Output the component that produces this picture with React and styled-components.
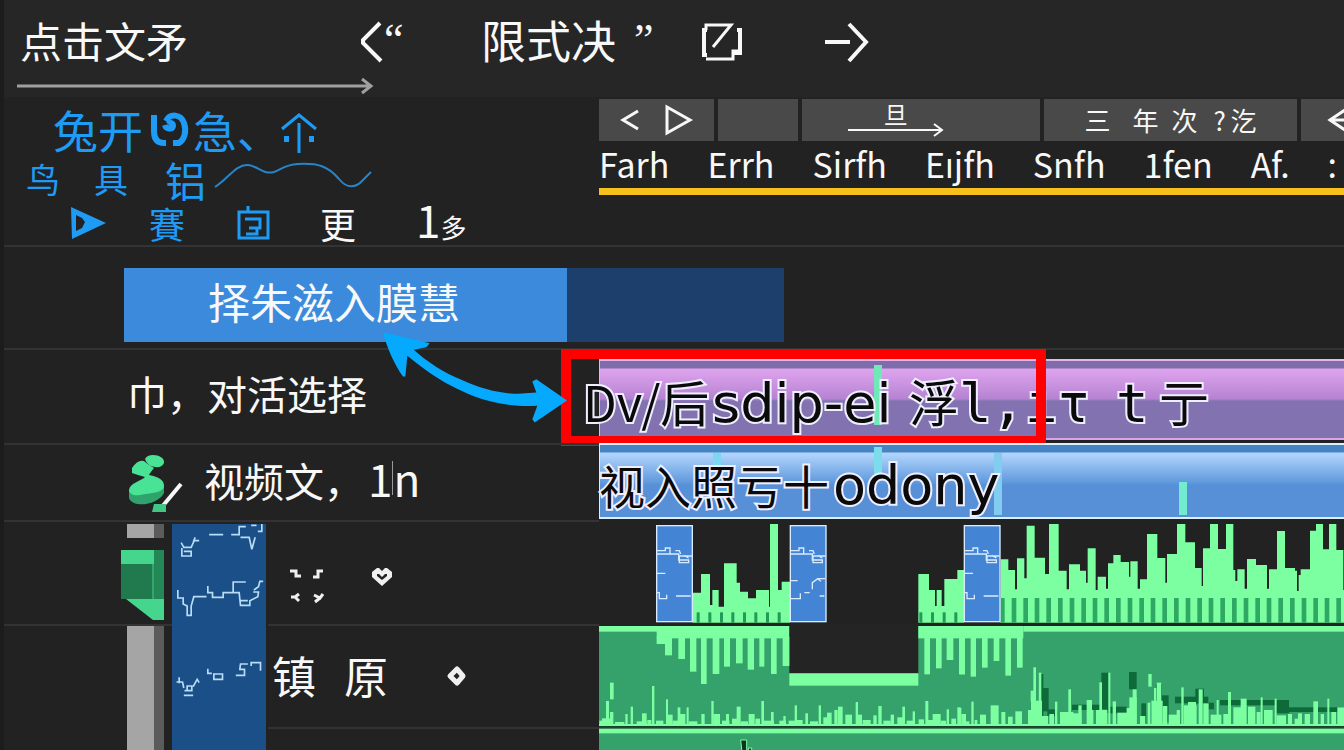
import React from "react";
import styled, { createGlobalStyle } from "styled-components";

const cjk = '"Noto Sans CJK SC", "Noto Sans", sans-serif';

const GlobalStyle = createGlobalStyle`
  * { box-sizing: border-box; }
  body { margin: 0; background: #222222; color: #f8f8f8; font-family: ${cjk}; overflow: hidden; }
  button { border: 0; padding: 0; font: inherit; color: inherit; }
`;

const Page = styled.main`
  display: flex;
  flex-direction: column;
  height: 100vh;
  border-left: 4px solid #1c1c1c;
`;

const Header = styled.header`
  background: #262626;
  padding-left: 16px;
  height: 97px;
  flex: none;
`;

const HeaderRow = styled.div`
  display: grid;
  grid-template-columns: 341fr 120fr 220fr 124fr 519fr;
  align-items: center;
  height: 80px;
`;

const HeaderGroup = styled.div`
  display: flex;
  align-items: center;
  gap: ${(p) => p.$gap || 0}px;
`;

const Title = styled.h1`
  margin: 0;
  font-size: ${(p) => p.$size || 42}px;
  line-height: 44px;
  font-weight: 400;
  white-space: nowrap;
`;

const Quote = styled.span`
  font-family: "Liberation Serif", serif;
  font-size: 44px;
  line-height: 44px;
`;

const Icon = styled.svg`
  display: block;
  flex: none;
  overflow: visible;
`;

const PlainButton = styled.button`
  background: none;
  display: flex;
  cursor: pointer;
`;

const Row = styled.section`
  display: grid;
  grid-template-columns: 595fr 745fr;
  flex: none;
  height: ${(p) => p.$height}px;
`;

const Notes = styled.div`
  display: flex;
  flex-direction: column;
  gap: 5px;
  padding: 11px 0 0 22px;
  color: #1e9bf5;
`;

const NoteLine = styled.div`
  display: flex;
  align-items: center;
  height: ${(p) => p.$height}px;
  padding-left: ${(p) => p.$indent || 0}px;
`;

const NoteGrid = styled(NoteLine)`
  display: grid;
  grid-template-columns: ${(p) => p.$columns};
`;

const Glyph = styled.span`
  font-size: ${(p) => p.$size}px;
  line-height: 36px;
  white-space: nowrap;
  color: ${(p) => (p.$white ? "#f8f8f8" : "inherit")};
`;

const Ruler = styled.div`
  min-width: 0;
  overflow: hidden;
`;

const Toolbar = styled.div`
  display: grid;
  grid-template-columns: 115fr 79fr 238fr 252fr 43fr;
  gap: 4px;
  padding-top: 2px;
`;

const Segment = styled.div`
  min-width: 0;
  height: 42px;
  background: #494949;
  display: flex;
  align-items: center;
  justify-content: ${(p) => p.$align || "center"};
  gap: 24px;
  padding-right: ${(p) => p.$inset || 0}px;
`;

const ArrowLabel = styled.button`
  background: none;
  display: flex;
  flex-direction: column;
  align-items: center;
  font-size: 24px;
  line-height: 26px;
`;

const SegmentText = styled.button`
  background: none;
  display: grid;
  grid-template-columns: 48px 39px 42px 17px 26px;
  text-align: left;
  font-size: 26px;
  line-height: 36px;
`;

const Marks = styled.ul`
  list-style: none;
  display: flex;
  gap: 38px;
  margin: 0;
  padding: 0;
  height: 47px;
  font-size: 34px;
  line-height: 46px;
  white-space: nowrap;
`;

const WorkBar = styled.div`
  height: 7px;
  background: #f8c01c;
`;

const ClipRow = styled.section`
  display: grid;
  grid-template-columns: 443fr 217fr 560fr;
  flex: none;
  height: 103px;
  padding: 21px 0 6px 120px;
  border-top: 2px solid #333333;
`;

const Clip = styled.div`
  background: #3b8adb;
  padding-left: 84px;
  font-size: 42px;
  line-height: 66px;
  white-space: nowrap;
`;

const ClipTail = styled.div`
  background: #1c3f6b;
`;

const Label = styled.div`
  position: relative;
  display: flex;
  align-items: center;
  gap: ${(p) => p.$gap || 0}px;
  padding: 0 0 8px ${(p) => p.$indent}px;
  border-top: 2px solid #333333;
  font-size: 40px;
  line-height: 44px;
  white-space: nowrap;
`;

const Count = styled.span`
  margin-left: 4px;
  font-size: 44px;
`;

const Caret = styled.span`
  display: inline-block;
  border-left: 1px solid #999999;
  line-height: 34px;
`;

const TrackCell = styled.div`
  position: relative;
  min-width: 0;
  padding-top: ${(p) => p.$top || 0}px;
  border-top: ${(p) => (p.$line ? "2px solid #333333" : "0")};
`;

const Track = styled.div`
  position: relative;
  height: ${(p) => p.$height}px;
  border-style: solid;
  border-width: 2px 0 2px 1px;
  border-color: ${(p) => p.$edge};
  background: ${(p) => p.$fill};
`;

const Marker = styled.span`
  position: absolute;
  left: ${(p) => p.$left}%;
  top: ${(p) => p.$top}px;
  height: ${(p) => p.$height}px;
  width: 8px;
  background: ${(p) => p.$color};
`;

const TrackTitle = styled.div`
  position: absolute;
  left: ${(p) => p.$left}px;
  top: ${(p) => p.$top}px;
  display: grid;
  grid-template-columns: ${(p) => p.$columns};
  align-items: baseline;
  font-family: "DejaVu Sans", ${cjk};
  font-size: 54px;
  line-height: 60px;
  color: #0a0a0a;
  -webkit-text-stroke: 4px #eeeeff;
  paint-order: stroke fill;
  white-space: nowrap;
`;

const Han = styled.span`
  font-family: ${cjk};
  font-size: ${(p) => p.$size}px;
`;

const Mono = styled.span`
  font-family: "DejaVu Sans Mono", monospace;
`;

const Highlight = styled.div`
  position: absolute;
  left: -38px;
  top: -1px;
  width: calc(65% + 1px);
  height: 97px;
  border: 10px solid #fd0000;
`;

const Pointer = styled.svg`
  position: absolute;
  right: 32px;
  top: -18px;
  z-index: 1;
`;

const Lower = styled.section`
  display: grid;
  grid-template-columns: 595fr 745fr;
  flex: 1;
  min-height: 0;
  overflow: hidden;
`;

const Side = styled.div`
  display: flex;
  min-height: 0;
  border-top: 2px solid #333333;
`;

const Scroller = styled.div`
  display: flex;
  flex-direction: column;
  width: 168px;
  padding-top: 2px;
`;

const Bar = styled.div`
  height: ${(p) => p.$height || 0}px;
  flex-grow: ${(p) => (p.$grow ? 1 : 0)};
  margin: 0 8px 0 123px;
  background: #a5a5a5;
  border-right: 10px solid #5b5b5b;
`;

const HandleRow = styled.div`
  height: 88px;
  padding: 12px 0 0 117px;
  border-bottom: 2px solid #333333;
`;

const BluePanel = styled.div`
  width: 94px;
  margin-top: 2px;
  background: #1b4f87;
  overflow: hidden;
`;

const SideRows = styled.div`
  flex: 1;
`;

const SideRow = styled.div`
  display: flex;
  align-items: ${(p) => (p.$top ? "flex-start" : "center")};
  gap: ${(p) => p.$gap}px;
  height: ${(p) => p.$height}px;
  padding-top: ${(p) => p.$top || 0}px;
  padding-bottom: ${(p) => (p.$top ? 0 : 4)}px;
  padding-left: ${(p) => p.$indent}px;
  margin-left: 2px;
  border-bottom: 2px solid #333333;
  font-size: 44px;
  line-height: 44px;
`;

const Waves = styled.div`
  display: flex;
  flex-direction: column;
  min-width: 0;
`;

const Wave = styled.svg`
  display: block;
  width: 100%;
  height: ${(p) => p.$height}px;
  flex: none;
`;

/* Each entry is the right edge of a column and the height of its top. */
const peaks = {
  a: [308, [333, 248, 360, 192, 367, 285, 386, 240, 402, 290, 440, 160, 450, 218, 474, 245, 498, 265, 537, 240, 540, 290, 564, 42, 575, 240, 600, 215]],
  b: [985, [1017, 192, 1035, 240, 1040, 288, 1055, 240, 1063, 288, 1102, 207, 1122, 180]],
  c: [122, [145, 148, 165, 180, 171, 238, 193, 145, 200, 205, 224, 47, 255, 143, 267, 192, 296, 42, 320, 182, 327, 238, 360, 163, 378, 182, 383, 218, 407, 115, 413, 240, 438, 200, 444, 236, 460, 160, 482, 135, 507, 156, 511, 200, 533, 154, 540, 236, 561, 208, 592, 72, 616, 144, 621, 218, 651, 132, 676, 42, 705, 97, 725, 174, 729, 228, 750, 115, 774, 42, 798, 117, 820, 42, 826, 180, 832, 213, 854, 178, 861, 236, 888, 147, 921, 165, 927, 236, 951, 178, 975, 63, 1005, 174, 1011, 182, 1016, 243, 1022, 195, 1050, 178, 1068, 62, 1089, 42, 1107, 118, 1129, 42, 1150, 120, 1156, 240]],
};

function skyline([start, list], base = 338) {
  let d = `M${start} ${base}`;
  let x = start;
  for (let i = 0; i < list.length; i += 2) {
    d += `L${x} ${list[i + 1]}H${list[i]}`;
    x = list[i];
  }
  return `${d}V${base}Z`;
}

const slitsLeft = [320, 355, 390, 424, 459, 493, 528, 563, 988, 1023, 1058, 1093];
const slitsRight = Array.from({ length: 30 }, (_, i) => 120 + Math.round(i * 34.8));

const teethLeft = [200, 25, 402, 225, 21, 436, 265, 20, 447, 300, 19, 485, 333, 17, 522, 368, 20, 492, 402, 18, 470, 438, 20, 460, 473, 19, 479, 508, 15, 470, 543, 17, 492, 578, 20, 468, 1003, 17, 493, 1038, 17, 475, 1070, 20, 450, 1107, 18, 493];
const teethRight = [0, 14, 493, 32, 16, 500, 66, 17, 473, 101, 17, 453, 136, 17, 497, 171, 17, 473];

const noiseLeft = [28, 15, 632, 36, 24, 625, 48, 9, 573, 60, 10, 606, 75, 28, 636, 106, 7, 612, 122, 7, 590, 140, 30, 634, 156, 14, 610, 172, 12, 630, 186, 7, 528, 198, 22, 632, 228, 6, 568, 232, 16, 614, 248, 22, 632, 263, 8, 592, 270, 16, 612, 290, 6, 592, 296, 26, 634, 334, 10, 612, 364, 7, 573, 370, 20, 612, 396, 22, 632, 408, 9, 612, 426, 22, 626, 440, 12, 590, 452, 22, 634, 476, 18, 612, 496, 14, 626, 514, 8, 573, 522, 30, 632, 543, 8, 606, 568, 20, 632, 580, 7, 618, 596, 20, 632, 614, 7, 586, 620, 18, 630, 646, 8, 610, 660, 24, 634, 686, 7, 586, 700, 12, 622, 711, 14, 608, 733, 10, 600, 744, 14, 590, 766, 20, 614, 797, 7, 576, 804, 12, 614, 818, 24, 630, 850, 10, 616, 865, 10, 588, 880, 22, 632, 902, 10, 614, 922, 20, 622, 937, 8, 590, 950, 24, 632, 968, 7, 604, 986, 16, 628, 1006, 9, 573, 1014, 16, 630, 1028, 24, 612, 1052, 16, 632, 1070, 7, 598, 1084, 14, 626, 1102, 10, 592, 1114, 14, 612];
const noiseRight = [0, 4, 594, 8, 20, 634, 34, 7, 575, 44, 8, 630, 60, 18, 614, 92, 24, 586, 124, 12, 606, 144, 14, 620, 166, 20, 604, 204, 14, 600, 212, 14, 542, 220, 8, 472, 228, 18, 572, 236, 8, 488, 246, 18, 618, 268, 14, 612, 285, 7, 575, 300, 40, 606, 325, 8, 538, 334, 30, 610, 355, 10, 586, 380, 16, 570, 392, 8, 600, 408, 34, 600, 418, 8, 517, 445, 6, 488, 458, 10, 574, 472, 30, 608, 500, 14, 594, 508, 22, 562, 518, 12, 538, 540, 16, 618, 563, 8, 578, 574, 34, 572, 582, 7, 534, 590, 14, 518, 608, 14, 588, 626, 26, 614, 650, 10, 600, 664, 7, 532, 672, 38, 586, 684, 24, 576, 716, 12, 538, 730, 16, 580, 752, 32, 614, 770, 6, 570, 790, 20, 612, 804, 9, 546, 820, 28, 592, 842, 18, 566, 864, 22, 590, 890, 12, 606, 902, 6, 562, 912, 26, 600, 944, 6, 566, 950, 28, 616, 984, 12, 612, 1004, 14, 626, 1014, 12, 610, 1034, 16, 612, 1060, 14, 574, 1082, 10, 612, 1102, 6, 566, 1114, 14, 606, 1132, 20, 592];
const shadows = [210, 20, 575, 72, 236, 14, 492, 150, 246, 20, 534, 70, 262, 30, 598, 20, 336, 86, 584, 16, 424, 22, 488, 110, 440, 60, 590, 20, 507, 23, 486, 52, 544, 14, 580, 60, 574, 14, 578, 60, 588, 18, 522, 60, 606, 20, 556, 80, 645, 100, 560, 20, 706, 26, 536, 44, 732, 30, 578, 20, 780, 206, 570, 16, 945, 42, 570, 40, 986, 166, 592, 14];

function Blocks({ data, bottom, top }) {
  const out = [];
  for (let i = 0; i < data.length; i += 3) {
    const y = top === undefined ? data[i + 2] : top;
    const end = top === undefined ? bottom : data[i + 2];
    out.push(<rect key={i} x={data[i]} y={y} width={data[i + 1]} height={end - y} />);
  }
  return out;
}

function FrameBlock({ x, second }) {
  return (
    <g transform={`translate(${x} 0)`} fill="none" stroke="#d9ecff" strokeWidth="4">
      <rect x="2" y="47" width="107" height="288" fill="#4384d4" />
      <path d="M2 122h26v-8h14v18M2 132h66v18h30v8h-28v-20h38M58 122h12l4 10M84 136l14 8" />
      {second ? (
        <path d="M2 212h22M2 266h30v-16M44 248h16M68 238v-20l16-12h22M84 206l10 8M90 258h14" />
      ) : (
        <path d="M2 190h26M2 248h8v18h22v-12M60 258h44" />
      )}
    </g>
  );
}

function UpperWave() {
  return (
    <Wave $height={104} viewBox="0 0 2235 312" preserveAspectRatio="none" aria-label="音频波形">
      <g transform="translate(-27 -30)">
        <path d={skyline(peaks.a)} fill="#7bffa1" />
        <path d={skyline(peaks.b)} fill="#7bffa1" />
        <g fill="#239a58">
          {slitsLeft.map((x) => <rect key={x} x={x} y="307" width="9" height="31" />)}
        </g>
        <FrameBlock x={198} />
        <FrameBlock x={599} second />
      </g>
      <g transform="translate(1083 -30)">
        <path d={skyline(peaks.c)} fill="#7bffa1" />
        <g fill="#2fa864">
          {slitsRight.map((x) => <rect key={x} x={x} y="264" width="14" height="74" />)}
        </g>
        <FrameBlock x={11} />
      </g>
    </Wave>
  );
}

function LowerWave() {
  const dark = [];
  for (let i = 0; i < shadows.length; i += 4) {
    dark.push(<rect key={i} x={shadows[i]} y={shadows[i + 2]} width={shadows[i + 1]} height={Math.min(shadows[i + 3], 646 - shadows[i + 2])} />);
  }
  return (
    <Wave $height={104} viewBox="0 0 2235 312" preserveAspectRatio="none" aria-label="音频波形">
      <rect y="6" width="2235" height="300" fill="#36a26b" />
      <g transform="translate(-27 -342)" fill="#7bffa1">
        <rect x="27" y="348" width="571" height="17" />
        <rect x="200" y="348" width="398" height="37" />
        <rect x="598" y="340" width="387" height="150" fill="#242424" />
        <rect x="598" y="490" width="387" height="37" />
        <rect x="985" y="348" width="315" height="37" />
        <rect x="1300" y="348" width="970" height="17" />
        <Blocks data={teethLeft} top={380} />
        <rect x="60" y="518" width="11" height="50" />
        <Blocks data={noiseLeft} bottom={648} />
        <rect x="27" y="642" width="2240" height="6" />
      </g>
      <g transform="translate(1083 -342)" fill="#7bffa1">
        <Blocks data={teethRight} top={380} />
        <g fill="#0e6b39">{dark}</g>
        <rect x="565" y="492" width="10" height="38" />
        <Blocks data={noiseRight} bottom={648} />
      </g>
      <rect y="307" width="2235" height="5" fill="#12512f" />
    </Wave>
  );
}

function BottomWave() {
  return (
    <Wave $height={24} viewBox="0 0 2235 72" preserveAspectRatio="none" aria-label="音频波形">
      <rect y="2" width="2235" height="70" fill="#36a26b" />
      <rect y="2" width="2235" height="14" fill="#7bffa1" />
      <path d="M425 36h18v36h-14zM448 60h10v12h-10z" fill="#10331f" stroke="#7bffa1" strokeWidth="3" />
    </Wave>
  );
}

const marks = ["Farh", "Errh", "Sirfh", "Eıjfh", "Snfh", "1fen", "Af.", ":"];

export default function App() {
  return (
    <>
      <GlobalStyle />
      <Page>
        <Header>
          <HeaderRow>
            <Title>点击文矛</Title>
            <HeaderGroup $gap={2}>
              <Icon width="21" height="44" viewBox="0 -4 21 44" fill="none" stroke="#f8f8f8" strokeWidth="4">
                <path d="M19 1 2 18v3l18 18" />
              </Icon>
              <Quote>“</Quote>
            </HeaderGroup>
            <HeaderGroup $gap={18}>
              <Title as="span" $size={45}>限式决</Title>
              <Quote>”</Quote>
            </HeaderGroup>
            <PlainButton aria-label="编辑">
              <Icon width="42" height="44" viewBox="0 -4 42 44" fill="none" stroke="#f8f8f8" strokeWidth="3">
                <path d="M5 8V3h25L12 25" />
                <path d="M6 8H3v25h3M36 8h3v23h-6" strokeWidth="4" />
                <path d="M5 37h27v-8h5" />
              </Icon>
            </PlainButton>
            <PlainButton aria-label="下一步">
              <Icon width="43" height="44" viewBox="0 -4 43 44" fill="none" stroke="#f8f8f8" strokeWidth="4">
                <path d="M0 20h25M24 2l17 18-17 19" />
              </Icon>
            </PlainButton>
          </HeaderRow>
          <Icon width="356" height="14" viewBox="0 0 356 14" fill="none" stroke="#a0a0a0" strokeWidth="3">
            <path d="M-3 6H350M342 -1l9 7-9 7" />
          </Icon>
        </Header>

        <Row $height={148}>
          <Notes>
            <NoteLine $height={44} $indent={27}>
              <Glyph $size={45}>兔开</Glyph>
              <Icon width="50" height="40" viewBox="-8 0 50 40" fill="none" stroke="#1e9bf5" strokeWidth="6">
                <path d="M3 5v16q0 12 10 12h2" />
                <path d="M15 11C19 3 30 4 33 13c3 9 0 17-5 20h-6" />
                <path d="M14 15c1 4 7 5 8 1 0-3-3-4-5-2" />
              </Icon>
              <Glyph $size={44}>急、</Glyph>
              <Icon width="36" height="42" viewBox="0 0 36 42" fill="none" stroke="#1e9bf5" strokeWidth="3">
                <path d="M1 20 18 6l17 14M18 14v30" />
                <path d="M3 30h5M28 30h5" strokeWidth="6" />
              </Icon>
            </NoteLine>
            <NoteGrid $height={39} $columns="68px 71px 49px 1fr">
              <Glyph $size={34}>鸟</Glyph>
              <Glyph $size={34}>具</Glyph>
              <Glyph $size={41}>铝</Glyph>
              <Icon width="158" height="44" viewBox="0 0 158 44" fill="none" stroke="#2784c8" strokeWidth="2">
                <path d="M1 30C14 22 22 7 34 8c10 1 15 10 26 7C68 12 70 8 84 7c20-1 30 2 41 15 8 10 17 9 24 1l8-8" />
              </Icon>
            </NoteGrid>
            <NoteGrid $height={39} $indent={44} $columns="79px 88px 83px 96px 1fr">
              <PlainButton aria-label="播放">
                <Icon width="36" height="34" viewBox="0 0 36 34" fill="#1e9bf5" fillRule="evenodd">
                  <path d="M1 1 36 17 2 33zM6 9v16l6-3 3-6-3-4z" />
                </Icon>
              </PlainButton>
              <Glyph $size={36}>賽</Glyph>
              <PlainButton aria-label="面板">
                <Icon width="34" height="34" viewBox="0 0 34 34" fill="none" stroke="#1e9bf5" strokeWidth="3">
                  <path d="M11 0v5M2 6h29v26H2zM8 13h15v9H12M20 22v6H9" />
                </Icon>
              </PlainButton>
              <Glyph $size={36} $white>更</Glyph>
              <span>
                <Glyph $size={44} $white>1</Glyph>
                <Glyph $size={26} $white>多</Glyph>
              </span>
            </NoteGrid>
          </Notes>
          <Ruler>
            <Toolbar>
              <Segment>
                <PlainButton aria-label="后退">
                  <Icon width="20" height="24" viewBox="0 0 20 24" fill="none" stroke="#f8f8f8" strokeWidth="3">
                    <path d="M18 3 3 12l15 9" />
                  </Icon>
                </PlainButton>
                <PlainButton aria-label="播放">
                  <Icon width="30" height="30" viewBox="0 0 30 30" fill="none" stroke="#f8f8f8" strokeWidth="3">
                    <path d="M3 2v26l23-13z" />
                  </Icon>
                </PlainButton>
              </Segment>
              <Segment />
              <Segment $inset={50}>
                <ArrowLabel>
                  旦
                  <Icon width="96" height="12" viewBox="0 0 96 12" fill="none" stroke="#f8f8f8" strokeWidth="2">
                    <path d="M0 3H93M86 -3l8 6-8 6" />
                  </Icon>
                </ArrowLabel>
              </Segment>
              <Segment>
                <SegmentText>
                  <span>三</span>
                  <span>年</span>
                  <span>次</span>
                  <span>?</span>
                  <span>汔</span>
                </SegmentText>
              </Segment>
              <Segment $align="flex-end">
                <PlainButton aria-label="返回">
                  <Icon width="17" height="24" viewBox="0 0 17 24" fill="none" stroke="#f8f8f8" strokeWidth="3">
                    <path d="M18 2 3 12l15 10M5 12h13" />
                  </Icon>
                </PlainButton>
              </Segment>
            </Toolbar>
            <Marks>
              {marks.map((m) => <li key={m}>{m}</li>)}
            </Marks>
            <WorkBar />
          </Ruler>
        </Row>

        <ClipRow>
          <Clip>择朱滋入膜慧</Clip>
          <ClipTail />
        </ClipRow>

        <Row $height={95}>
          <Label $indent={123}>
            巾，对活选择
            <Pointer width="184" height="91" viewBox="845 247 552 272" fill="#05a9fd">
              <path d="M845 247 985 280 975 292 937 300C975 335 1030 370 1080 390 1140 418 1200 432 1250 432L1305 428 1293 395 1305 388 1397 452 1300 518 1293 508 1308 468C1230 472 1170 458 1120 440 1050 412 1000 385 918 318L912 380H905C880 345 855 290 845 247z" />
            </Pointer>
          </Label>
          <TrackCell $top={9} $line>
            <Track $height={81} $edge="#e6b5ee #e6b5ee #d9a5e8 #e6b5ee" $fill="linear-gradient(#7f6dab 0 7px, #dfa4ee 8px, #b583d2 38px, #8273b0 40px)">
              <Marker $left={36.8} $top={4} $height={60} $color="#70e8b8" />
            </Track>
            <TrackTitle $left={-16} $top={20} $columns="129px 197px 116px 91px 43px 50px">
              <Han $size={49}>Dv/后</Han>
              <span>sdip-ei</span>
              <span><Han $size={50}>浮</Han><Mono>l,</Mono></span>
              <Mono>ıτ</Mono>
              <Mono>t</Mono>
              <Han $size={50}>亍</Han>
            </TrackTitle>
            <Highlight />
          </TrackCell>
        </Row>

        <Row $height={77}>
          <Label $indent={124} $gap={20}>
            <Icon width="56" height="66" viewBox="0 -8 56 66">
              <path d="M1 36v8c3 10 28 8 35-5V30z" fill="#2fa36b" />
              <path d="M4 14q6-9 12-7 3 3 10 7-4 5-5 7c10 2 15 5 15 11 0 7-14 7-24 9-6 1-11-1-11-5 1-7 12-9 16-13-5-1-9-3-13-4z" fill="#48e394" />
              <path d="M17 5q2-4 8-4c6 0 12 3 11 8q-2 5-9 4-8-1-10-8z" fill="#48e394" />
              <path d="M53 30 33 54" stroke="#f8f8f8" strokeWidth="4" />
              <path d="M26 50h12v8H24z" fill="#40c785" />
            </Icon>
            <span>视频文，<Count>1<Caret>n</Caret></Count></span>
          </Label>
          <TrackCell>
            <Track $height={76} $edge="#dcefff" $fill="linear-gradient(#4683c3 0 7px, #b4d6fd 8px, #5e98dc 38px, #5790d7 40px)">
              <Marker $left={15.2} $top={8} $height={14} $color="#7cd8f0" />
              <Marker $left={36.8} $top={2} $height={30} $color="#7cdcec" />
              <Marker $left={53} $top={8} $height={62} $color="#82ccf0" />
              <Marker $left={77.8} $top={37} $height={33} $color="#72ecd0" />
            </Track>
            <TrackTitle $left={0} $top={11} $columns="234px auto">
              <Han $size={46}>视入照亏十</Han>
              <span>odony</span>
            </TrackTitle>
          </TrackCell>
        </Row>

        <Lower>
          <Side>
            <Scroller>
              <Bar $height={14} />
              <HandleRow>
                <Icon width="43" height="70" viewBox="0 0 43 70">
                  <path d="M0 0h43v14H0z" fill="#45d58c" />
                  <path d="M0 14h33v35H0z" fill="#217a4d" />
                  <path d="M33 0h10v49H33z" fill="#238756" />
                  <path d="M32 14v35" stroke="#45d58c" />
                  <path d="M5 49h38v21H32z" fill="#45d58c" />
                </Icon>
              </HandleRow>
              <Bar $grow />
            </Scroller>
            <BluePanel>
              <Icon width="94" height="226" viewBox="215 42 281 678" fill="none" stroke="#b9dcf7" strokeWidth="5">
                <path d="M242 98l8 14h22l10-22M284 82l-4 10h16M244 114v24h28v-14h-22M326 74h42M392 74h24v-24h20M420 82h26l8 36 10-36M452 46h16M484 42v22h-12" />
                <path d="M232 240v24h16v18l12 6v28h12v-28l8-28h38M322 228v20h14v14h32v-14h30v-32h38M398 248h18l4 38h28v-14l24-12 2-14h-16M420 272h22M460 240l14-10 4-16h10" />
                <path d="M236 502v18M228 516h18l4 18M250 556h28M252 542h22v-14h-14v14M278 530l12-22 6 10M322 476v14h12M340 492h26v16h-26zM406 496h26v-18h-14l2-16h22M452 468v-10h28v24" />
              </Icon>
            </BluePanel>
            <SideRows>
              <SideRow $height={104} $indent={22} $gap={48} $top={46}>
                <Icon width="34" height="36" viewBox="0 0 34 36" fill="none" stroke="#f0f0f0" strokeWidth="3">
                  <path d="M0 3h6v5h5M33 3h-5v6h-5M1 29h4l4-3M5 29l4 4M24 27l6 3 3-4M30 30l-5 4" />
                </Icon>
                <Icon width="20" height="20" viewBox="0 0 20 20" fill="#f0f0f0" fillRule="evenodd">
                  <path d="M5 0h2l3 3 3-3h2l5 4v5L10 18 0 9V4zM5 6v2l5 4 5-4V6h-2l-3 3-3-3z" />
                </Icon>
              </SideRow>
              <SideRow $height={103} $indent={4} $gap={28}>
                <span>镇</span>
                <span>原</span>
                <Icon width="78" height="20" viewBox="-32 -1 78 20" fill="none" stroke="#f0f0f0" strokeWidth="5" strokeLinejoin="round">
                  <path d="m9 3 6 7-6 7-7-7z" />
                </Icon>
              </SideRow>
            </SideRows>
          </Side>
          <Waves>
            <UpperWave />
            <LowerWave />
            <BottomWave />
          </Waves>
        </Lower>
      </Page>
    </>
  );
}
